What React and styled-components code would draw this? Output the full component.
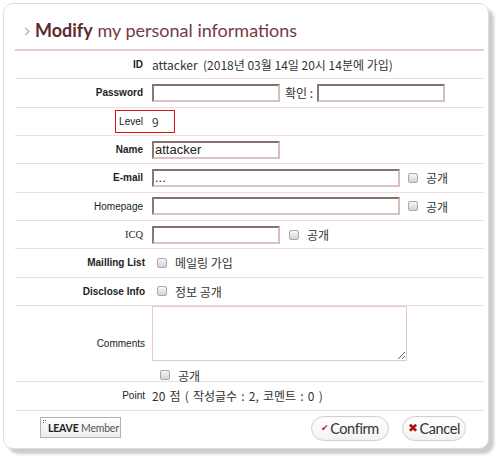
import React from "react";
import styled, { createGlobalStyle } from "styled-components";

const Global = createGlobalStyle`
  html, body { margin: 0; padding: 0; background: #fff; }
  body { width: 500px; height: 462px; overflow: hidden; }
`;

const Card = styled.div`
  box-sizing: border-box;
  margin: 3px 0 0 3px;
  width: 486px;
  height: 446px;
  border: 1px solid #dedede;
  border-radius: 10px;
  background: #fff;
  box-shadow: 5px 5px 3px rgba(0, 0, 0, 0.2);
  padding: 0 4px 0 11px;
  display: flex;
  flex-direction: column;
`;

const Header = styled.div`
  height: 47px;
  box-sizing: border-box;
  display: flex;
  align-items: flex-end;
  padding: 0 0 8px 9px;
  border-bottom: 2px solid #e6cdcd;
`;

const Arrow = styled.svg`
  width: 7px;
  height: 9px;
  margin: 0 4px 5px 0;
  flex: none;
`;

const Title = styled.h1`
  margin: 0;
  font: 400 18px/22px Lato, "Open Sans", sans-serif;
  color: #753a45;
  white-space: nowrap;
  b {
    font-weight: 700;
    color: #612832;
  }
`;

const Row = styled.div`
  position: relative;
  display: flex;
  align-items: center;
  box-sizing: border-box;
  height: ${(p) => p.$h || "28.33px"};
  border-bottom: 1px solid #efdddd;
`;

const Label = styled.div`
  flex: none;
  width: 137px;
  box-sizing: border-box;
  padding-right: ${(p) => (p.$pr != null ? p.$pr : 9)}px;
  text-align: right;
  font-family: ${(p) => (p.$serif ? '"Liberation Serif", serif' : '"Liberation Sans", Arial, sans-serif')};
  font-size: ${(p) => (p.$serif ? 10.5 : 10)}px;
  font-weight: ${(p) => (p.$bold ? 700 : 400)};
  color: #222;
`;

const Value = styled.div`
  display: flex;
  flex-direction: ${(p) => (p.$col ? "column" : "row")};
  align-items: ${(p) => (p.$col ? "flex-start" : "center")};
  align-self: ${(p) => (p.$col ? "flex-start" : "auto")};
  font: 12px "Noto Sans CJK KR", sans-serif;
  word-spacing: ${(p) => p.$ws || 0}px;
  color: #333;
  white-space: nowrap;
`;

const Field = styled.input`
  box-sizing: border-box;
  width: ${(p) => p.$w}px;
  height: 18px;
  margin: 0;
  padding: 0 1px;
  border-style: solid;
  border-width: 2px;
  border-color: #86716f #d9bcbc #dcc2c2 #8d7777;
  font: 13px "Liberation Sans", Arial, sans-serif;
  color: #222;
  background: #fff;
  outline: none;
`;

const Check = styled.input.attrs({ type: "checkbox" })`
  appearance: none;
  box-sizing: border-box;
  width: 10px;
  height: 10px;
  margin: 0 0 0 ${(p) => p.$ml || 0}px;
  border: 1px solid #a9a9a9;
  border-radius: 2px;
  background: linear-gradient(#f6f6f6, #d4d4d4);
  flex: none;
`;

const Txt = styled.span`
  margin-left: ${(p) => p.$ml || 0}px;
  margin-right: ${(p) => p.$mr || 0}px;
`;

const Highlight = styled.div`
  position: absolute;
  left: 100px;
  top: 2px;
  width: 60px;
  height: 23px;
  box-sizing: border-box;
  border: 1px solid #e01010;
  pointer-events: none;
`;

const Area = styled.textarea`
  box-sizing: border-box;
  width: 255px;
  height: 55px;
  margin: 0;
  border: 1px solid #e5c9c9;
  border-top-color: #e0cccc;
  background: #fff;
  outline: none;
  resize: both;
`;

const CheckLine = styled.div`
  display: flex;
  align-items: center;
  margin: 6px 0 0 8px;
`;

const Footer = styled.div`
  display: flex;
  align-items: flex-start;
  padding: 5px 18px 0 25px;
`;

const LeaveBtn = styled.button`
  position: relative;
  box-sizing: border-box;
  width: 81px;
  height: 21px;
  margin-top: 1px;
  padding: 2px 0 0 7px;
  border: 1px solid #b4b4b4;
  background: linear-gradient(#ffffff, #ececec);
  font: 10.5px Lato, "Open Sans", sans-serif;
  color: #555;
  text-align: left;
  letter-spacing: -0.2px;
  white-space: nowrap;
  b { font-weight: 700; color: #222; }
`;

const Dots = styled.svg`
  position: absolute;
  left: 2px;
  top: 2px;
  width: 5px;
  height: 4px;
`;

const Pill = styled.button`
  box-sizing: border-box;
  height: 25px;
  margin-left: ${(p) => p.$ml || 0}px;
  padding: 0 ${(p) => p.$px || 8}px;
  border: 1px solid #d2d2d2;
  border-radius: 13px;
  background: linear-gradient(#ffffff, #f3f3f3);
  box-shadow: inset 0 0 2px #e6e6e6;
  font: 14.5px Lato, "Open Sans", sans-serif;
  letter-spacing: -0.4px;
  color: #333;
  display: flex;
  align-items: center;
  white-space: nowrap;
`;

const Mark = styled.span`
  font-family: "DejaVu Sans", sans-serif;
  font-size: ${(p) => p.$s}px;
  font-weight: 700;
  color: ${(p) => p.$c};
  margin-right: 2px;
`;

const Spacer = styled.div`
  flex: 1;
`;

export default function App() {
  return (
    <>
      <Global />
      <Card>
        <Header>
          <Arrow viewBox="0 0 7 9">
            <polyline points="1,1 5,4.5 1,8" fill="none" stroke="#c4b4b4" strokeWidth="1.4" />
          </Arrow>
          <Title>
            <b>Modify</b> my personal informations
          </Title>
        </Header>

        <Row>
          <Label $bold>ID</Label>
          <Value>attacker&nbsp;&nbsp;(2018년 03월 14일 20시 14분에 가입)</Value>
        </Row>
        <Row>
          <Label $bold>Password</Label>
          <Value>
            <Field type="password" $w={128} />
            <Txt $ml={5} $mr={4}>확인 :</Txt>
            <Field type="password" $w={128} />
          </Value>
        </Row>
        <Row>
          <Label>Level</Label>
          <Value>9</Value>
          <Highlight />
        </Row>
        <Row>
          <Label $bold>Name</Label>
          <Value>
            <Field $w={128} defaultValue="attacker" />
          </Value>
        </Row>
        <Row>
          <Label $bold>E-mail</Label>
          <Value>
            <Field $w={248} defaultValue="..." />
            <Check $ml={8} />
            <Txt $ml={8}>공개</Txt>
          </Value>
        </Row>
        <Row>
          <Label>Homepage</Label>
          <Value>
            <Field $w={248} />
            <Check $ml={8} />
            <Txt $ml={8}>공개</Txt>
          </Value>
        </Row>
        <Row>
          <Label $serif>ICQ</Label>
          <Value>
            <Field $w={128} />
            <Check $ml={9} />
            <Txt $ml={8}>공개</Txt>
          </Value>
        </Row>
        <Row>
          <Label $bold $pr={7}>Mailling List</Label>
          <Value>
            <Check $ml={5} />
            <Txt $ml={8}>메일링 가입</Txt>
          </Value>
        </Row>
        <Row>
          <Label $bold $pr={7}>Disclose Info</Label>
          <Value>
            <Check $ml={5} />
            <Txt $ml={8}>정보 공개</Txt>
          </Value>
        </Row>
        <Row $h="76px">
          <Label $pr={7}>Comments</Label>
          <Value $col>
            <Area />
            <CheckLine>
              <Check />
              <Txt $ml={8}>공개</Txt>
            </CheckLine>
          </Value>
        </Row>
        <Row $h="29px">
          <Label $pr={7}>Point</Label>
          <Value $ws={1.5}>20 점 ( 작성글수 : 2, 코멘트 : 0 )</Value>
        </Row>

        <Footer>
          <LeaveBtn>
            <Dots viewBox="0 0 5 4">
              <rect x="0" y="0" width="1" height="1" fill="#555" />
              <rect x="0" y="2" width="1" height="1" fill="#555" />
              <rect x="2" y="0" width="1" height="1" fill="#555" />
            </Dots>
            <b>LEAVE</b> Member
          </LeaveBtn>
          <Spacer />
          <Pill $px={9}>
            <Mark $s={9} $c="#c8102e">✔</Mark>Confirm
          </Pill>
          <Pill $ml={13} $px={5}>
            <Mark $s={12} $c="#b30f0f">✖</Mark>Cancel
          </Pill>
        </Footer>
      </Card>
    </>
  );
}
